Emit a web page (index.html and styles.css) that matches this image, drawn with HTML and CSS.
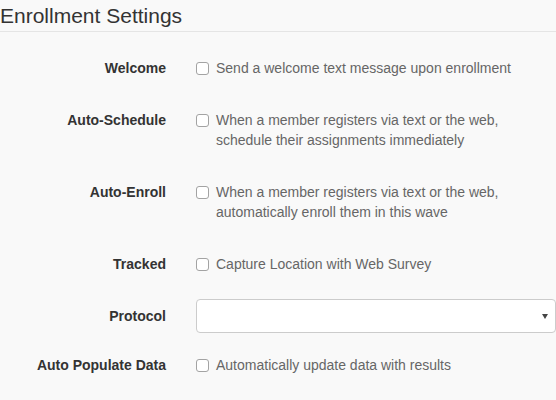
FILE: index.html
```html
<!DOCTYPE html>
<html>
<head>
<meta charset="utf-8">
<link rel="stylesheet" href="styles.css">
</head>
<body>
<div class="page">
  <div class="legend">Enrollment Settings</div>
  <div class="form">
    <div class="group">
      <div class="label">Welcome</div>
      <div class="control check">
        <span class="box"></span>
        <span class="text">Send a welcome text message upon enrollment</span>
      </div>
    </div>
    <div class="group">
      <div class="label">Auto-Schedule</div>
      <div class="control check">
        <span class="box"></span>
        <span class="text">When a member registers via text or the web, schedule their assignments immediately</span>
      </div>
    </div>
    <div class="group">
      <div class="label">Auto-Enroll</div>
      <div class="control check">
        <span class="box"></span>
        <span class="text">When a member registers via text or the web, automatically enroll them in this wave</span>
      </div>
    </div>
    <div class="group">
      <div class="label">Tracked</div>
      <div class="control check">
        <span class="box"></span>
        <span class="text">Capture Location with Web Survey</span>
      </div>
    </div>
    <div class="group">
      <div class="label">Protocol</div>
      <div class="control">
        <div class="select"><span class="caret"></span></div>
      </div>
    </div>
    <div class="group">
      <div class="label">Auto Populate Data</div>
      <div class="control check">
        <span class="box"></span>
        <span class="text">Automatically update data with results</span>
      </div>
    </div>
  </div>
</div>
</body>
</html>
```
FILE: styles.css
```css
html, body {
  margin: 0;
  padding: 0;
  background: #f9f9f9;
}
body {
  font-family: "Liberation Sans", Arial, sans-serif;
  font-size: 14px;
  line-height: 20px;
  color: #333;
}
.page {
  padding-top: 1px;
  width: 556px;
  height: 399px;
  overflow: hidden;
}
.legend {
  font-size: 21px;
  line-height: 30px;
  color: #333;
  border-bottom: 1px solid #e5e5e5;
  margin-bottom: 19px;
}
.form {
  display: flex;
  flex-direction: column;
}
.group {
  display: flex;
  margin-bottom: 15px;
}
.label {
  width: 166px;
  flex: none;
  text-align: right;
  font-weight: bold;
  padding-top: 7px;
  color: #333;
}
.control {
  margin-left: 30px;
  flex: 1;
}
.check {
  display: flex;
  align-items: flex-start;
  padding-top: 7px;
  padding-bottom: 10px;
  color: #666;
}
.box {
  flex: none;
  width: 11px;
  height: 11px;
  margin-top: 4px;
  margin-right: 7px;
  border: 1px solid #a3a3a3;
  border-radius: 3px;
  background: #fff;
}
.text {
  max-width: 320px;
}
.select {
  height: 32px;
  border: 1px solid #ccc;
  border-radius: 4px;
  background: #fff;
  display: flex;
  align-items: center;
  justify-content: flex-end;
  padding-right: 7px;
}
.caret {
  width: 0;
  height: 0;
  border-left: 3px solid transparent;
  border-right: 3px solid transparent;
  border-top: 5px solid #444;
  margin-top: 1px;
}
```
